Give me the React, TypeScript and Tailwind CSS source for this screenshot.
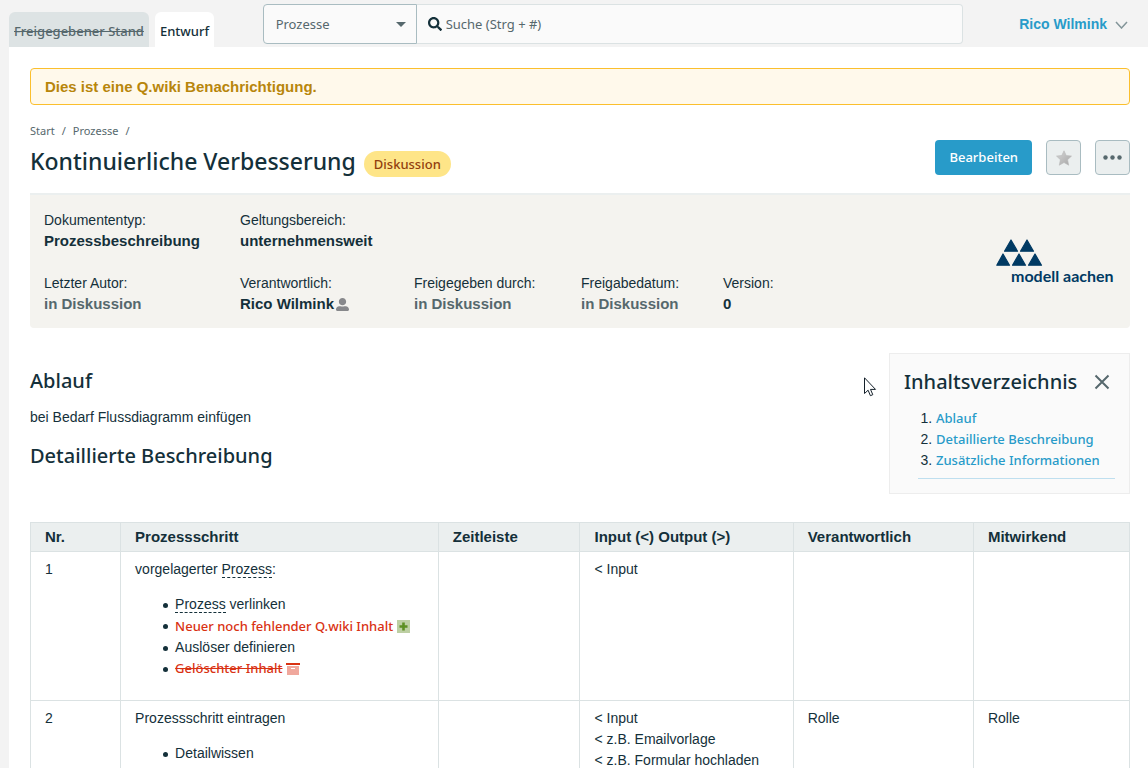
import type { ReactNode } from "react";
import { FaSearch, FaUserAlt } from "react-icons/fa";

const UI = "font-['Noto_Sans','Open_Sans',sans-serif]";

function Logo() {
  return (
    <svg
      role="img"
      aria-label="modell aachen"
      width="124"
      height="48"
      viewBox="0 0 124 48"
      fill="#003a63"
      className="shrink-0"
    >
      <path
        d="M15 2l6.500 11.200h-13zM31 2l6.500 11.200h-13zM7 16l6.500 11.200H.8zM23 16l6.500 11.200h-13zM39 16l6.500 11.200h-13z"
        stroke="#003a63"
        strokeWidth="1.200"
        strokeLinejoin="round"
      />
      <text x="15" y="44" fontSize="16" fontWeight="700" fontFamily="Lato, sans-serif">
        modell aachen
      </text>
    </svg>
  );
}

function Fact({ label, muted, children }: { label: string; muted?: boolean; children: ReactNode }) {
  return (
    <div>
      <dt>{label}</dt>
      <dd className={muted ? "text-[15px] leading-5 font-bold text-[#56686d]" : "flex items-center gap-0.5 text-[15px] leading-5 font-bold"}>
        {children}
      </dd>
    </div>
  );
}

function Term() {
  return (
    <a href="#prozess" className="border-b border-dashed border-[#14303a]">
      Prozess
    </a>
  );
}

const columns = ["Nr.", "Prozessschritt", "Zeitleiste", "Input (<) Output (>)", "Verantwortlich", "Mitwirkend"];
const toc = ["Ablauf", "Detaillierte Beschreibung", "Zusätzliche Informationen"];
const cell = "border border-[#dbe2e3] px-3.5 pt-[7px] pb-[21px] align-top";
const bullets = "mt-3.5 pl-10";

function Item({ children }: { children: ReactNode }) {
  return (
    <li className="relative before:absolute before:top-[9px] before:-left-3 before:size-[5px] before:rounded-full before:bg-[#14303a]">
      {children}
    </li>
  );
}

export default function App() {
  return (
    <div className="h-screen overflow-hidden bg-[#f3f3f3] font-['Liberation_Sans',Arial,sans-serif] text-[14px] leading-[21px] text-[#14303a]">
      <header className="flex h-[47px] items-start justify-between pl-[9px]">
        <nav aria-label="Stand" className={`mt-3 flex gap-1.5 text-[13px] font-medium ${UI}`}>
          <a href="#stand" className="flex h-[35px] items-center rounded-t-md bg-[#dde3e4] px-[5px] pt-1 text-[#56686d] line-through">
            Freigegebener Stand
          </a>
          <a href="#entwurf" className="flex h-[35px] items-center rounded-t-md bg-white px-[5px] pt-1">
            Entwurf
          </a>
        </nav>
        <form className={`mt-1 ml-12 flex h-10 max-w-[700px] flex-1 text-[13px] text-[#56686d] ${UI}`}>
          <div className="relative w-[154px] shrink-0">
            <select aria-label="Bereich" className="h-full w-full appearance-none rounded-l border border-[#a9bcc1] bg-[#fafafa] pl-3">
              <option>Prozesse</option>
            </select>
            <svg className="pointer-events-none absolute top-[18px] right-[11px]" width="10" height="5" viewBox="0 0 10 5" fill="#56686d" aria-hidden="true">
              <path d="M0 0h10L5 5z" />
            </svg>
          </div>
          <label className="flex flex-1 items-center gap-1 rounded-r border border-l-0 border-[#dbe2e3] bg-[#fafafa] pl-[11px]">
            <FaSearch className="size-3.5 text-[#14303a]" aria-hidden="true" />
            <input aria-label="Suche" type="search" placeholder="Suche (Strg + #)" className="flex-1 bg-transparent outline-none placeholder:text-[#56686d]" />
          </label>
        </form>
        <button type="button" className="mt-3.5 mr-5 ml-14 flex items-center gap-2 font-bold text-[#289bc9]">
          Rico Wilmink
          <svg width="13" height="8" viewBox="0 0 13 8" fill="none" stroke="#839599" strokeWidth="1.500" aria-hidden="true">
            <path d="M1 1l5.500 6L12 1" />
          </svg>
        </button>
      </header>

      <main className="ml-[9px] min-h-full bg-white pt-[21px] pr-[18px] pl-[21px]">
        <p role="status" className="rounded border border-[#fbbf2d] bg-[#fff9eb] px-3.5 py-[7px] text-[15px] font-bold text-[#b8860b]">
          Dies ist eine Q.wiki Benachrichtigung.
        </p>

        <div className="mt-[15px] flex items-start justify-between">
          <div className={UI}>
            <nav aria-label="Brotkrumen" className="flex gap-[7px] text-[11px] text-[#56686d]">
              <a href="#start">Start</a>
              <span>/</span>
              <a href="#prozesse">Prozesse</a>
              <span>/</span>
            </nav>
            <div className="flex items-center gap-2">
              <h1 className="text-[23px] leading-[40px] font-medium">Kontinuierliche Verbesserung</h1>
              <span className="mt-1.5 rounded-full bg-[#fee588] px-2.5 text-[13px] leading-[26px] font-medium text-[#923f0e]">Diskussion</span>
            </div>
          </div>
          <div className="mt-5 flex gap-3.5">
            <button type="button" className={`h-[35px] rounded bg-[#289bc9] px-3.5 text-[13px] font-medium text-white ${UI}`}>
              Bearbeiten
            </button>
            <button type="button" aria-label="Favorit" className="flex size-[35px] items-center justify-center rounded border border-[#a9bcc1] bg-[#ebefef]">
              <svg width="16" height="16" viewBox="0 0 16 16" aria-hidden="true">
                <defs>
                  <linearGradient id="star" x1="0" y1="0" x2="1" y2="1">
                    <stop offset="0" stopColor="#d6d6d6" />
                    <stop offset="1" stopColor="#a6a6a6" />
                  </linearGradient>
                </defs>
                <path d="M8 .8l2.200 4.700 5.300.6-3.900 3.600 1.100 5.500L8 12.500l-4.700 2.700 1.100-5.500L.5 6.100l5.300-.6z" fill="url(#star)" stroke="#b8b8b8" strokeWidth=".6" />
              </svg>
            </button>
            <button type="button" aria-label="Mehr" className="flex size-[35px] items-center justify-center rounded border border-[#a9bcc1] bg-[#ebefef]">
              <svg width="19" height="5" viewBox="0 0 19 5" fill="#56686d" aria-hidden="true">
                <circle cx="2.500" cy="2.500" r="2.200" />
                <circle cx="9.500" cy="2.500" r="2.200" />
                <circle cx="16.500" cy="2.500" r="2.200" />
              </svg>
            </button>
          </div>
        </div>

        <section aria-label="Dokumentinformationen" className="mt-3 flex items-center justify-between rounded-b border-t-2 border-[#ebefef] bg-[#f4f3ef] pt-[15px] pr-2.5 pb-3.5 pl-3.5">
          <dl className="grid grid-cols-[196px_174px_167px_142px_auto] gap-y-[22px]">
            <Fact label="Dokumententyp:">Prozessbeschreibung</Fact>
            <div className="col-span-4">
              <Fact label="Geltungsbereich:">unternehmensweit</Fact>
            </div>
            <Fact label="Letzter Autor:" muted>in Diskussion</Fact>
            <Fact label="Verantwortlich:">
              Rico Wilmink
              <FaUserAlt className="size-[13px] text-[#87888b]" aria-hidden="true" />
            </Fact>
            <Fact label="Freigegeben durch:" muted>in Diskussion</Fact>
            <Fact label="Freigabedatum:" muted>in Diskussion</Fact>
            <Fact label="Version:">0</Fact>
          </dl>
          <Logo />
        </section>

        <div className="mt-[25px] flex items-start justify-between">
          <div>
            <h2 className={`mt-3.5 text-[20px] leading-[28px] font-medium ${UI}`}>Ablauf</h2>
            <p className="mt-3">bei Bedarf Flussdiagramm einfügen</p>
            <h2 className={`mt-3.5 text-[20px] leading-[28px] font-medium ${UI}`}>Detaillierte Beschreibung</h2>
          </div>
          <aside className="w-[241px] border border-[#ededed] bg-[#fafafa] p-3.5">
            <div className="flex items-center justify-between pr-[5px]">
              <h2 className={`text-[20px] leading-[28px] font-medium ${UI}`}>Inhaltsverzeichnis</h2>
              <button type="button" aria-label="Schließen">
                <svg width="16" height="16" viewBox="0 0 16 16" fill="none" stroke="#56686d" strokeWidth="2" aria-hidden="true">
                  <path d="M1.500 1.500l13 13M14.500 1.500l-13 13" />
                </svg>
              </button>
            </div>
            <ol className="mt-3 ml-3.5 list-decimal border-b border-[#bfdfef] pb-[7px] pl-[18px]">
              {toc.map((t) => (
                <li key={t}>
                  <a href={`#${t}`} className={`block text-[13px] font-medium text-[#289bc9] ${UI}`}>{t}</a>
                </li>
              ))}
            </ol>
          </aside>
        </div>

        <table className="mt-7 w-full table-fixed border-collapse">
          <colgroup>
            <col className="w-[8.200%]" />
            <col className="w-[28.900%]" />
            <col className="w-[12.900%]" />
            <col className="w-[19.400%]" />
            <col className="w-[16.400%]" />
            <col />
          </colgroup>
          <thead>
            <tr className="bg-[#ebefef] text-left text-[15px]">
              {columns.map((c) => (
                <th key={c} scope="col" className="border border-[#dbe2e3] px-3.5 py-[3px] leading-[22px]">{c}</th>
              ))}
            </tr>
          </thead>
          <tbody>
            <tr>
              <td className={cell}>1</td>
              <td className={cell}>
                vorgelagerter <Term />:
                <ul className={bullets}>
                  <Item><Term /> verlinken</Item>
                  <Item>
                    <a href="#neu" className={`flex items-center gap-1 pt-px text-[13px] font-medium text-[#d93213] ${UI}`}>
                      Neuer noch fehlender Q.wiki Inhalt
                      <svg width="13" height="13" viewBox="0 0 13 13" aria-hidden="true">
                        <path d="M0 0h13v13H0z" fill="#bdcfa3" />
                        <path d="M5.200 2.500h2.600v2.700h2.700v2.600H7.800v2.700H5.200V7.800H2.500V5.200h2.700z" fill="#5c8f22" />
                      </svg>
                    </a>
                  </Item>
                  <Item>Auslöser definieren</Item>
                  <Item>
                    <a href="#geloescht" className={`flex items-center gap-1 text-[13px] font-medium text-[#d93213] ${UI}`}>
                      <span className="line-through">Gelöschter Inhalt</span>
                      <svg width="14" height="12" viewBox="0 0 14 12" aria-hidden="true">
                        <path d="M0 0h14v2H0z" fill="#d93213" />
                        <path d="M1 3h12v9H1z" fill="#f0a89d" />
                        <path d="M5 5h4v1H5z" fill="#fff" />
                      </svg>
                    </a>
                  </Item>
                </ul>
              </td>
              <td className={cell} />
              <td className={cell}>&lt; Input</td>
              <td className={cell} />
              <td className={cell} />
            </tr>
            <tr>
              <td className={cell}>2</td>
              <td className={cell}>
                Prozessschritt eintragen
                <ul className={bullets}>
                  <Item>Detailwissen</Item>
                </ul>
              </td>
              <td className={cell} />
              <td className={cell}>
                <p>&lt; Input</p>
                <p>&lt; z.B. Emailvorlage</p>
                <p>&lt; z.B. Formular hochladen</p>
              </td>
              <td className={cell}>Rolle</td>
              <td className={cell}>Rolle</td>
            </tr>
          </tbody>
        </table>
      </main>

      <svg className="pointer-events-none absolute top-[377px] left-[864px]" width="13" height="20" viewBox="0 0 13 20" aria-hidden="true">
        <path d="M.5.800v15.700l3.600-3.300 2.300 5.500 2.400-1-2.300-5.300h5z" fill="#fff" stroke="#14202a" />
      </svg>
    </div>
  );
}
